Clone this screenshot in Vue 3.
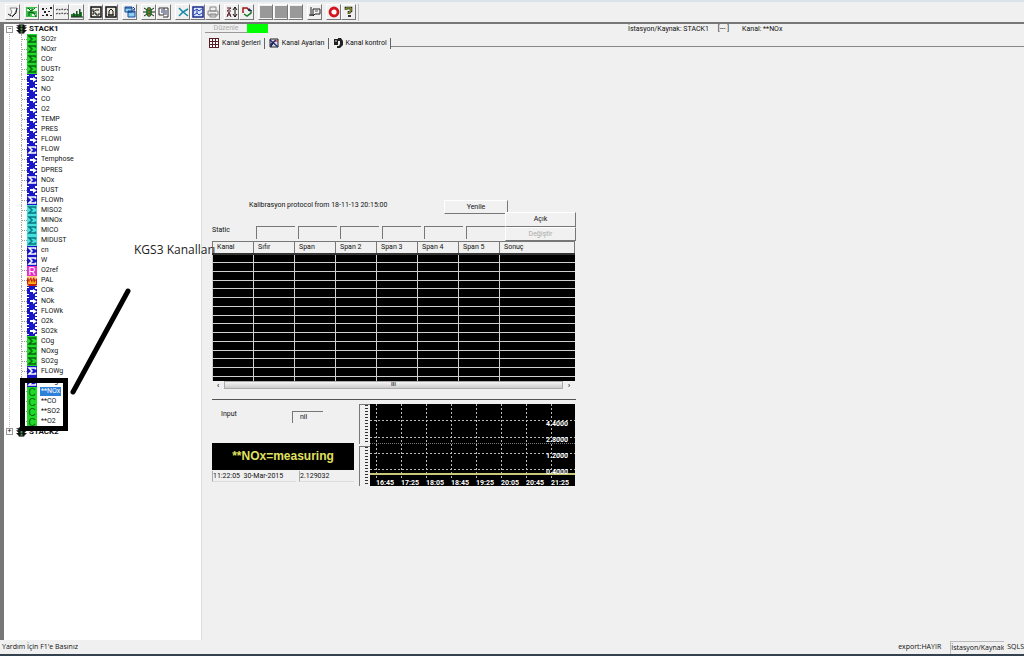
<script setup>
const toolGroups = [
  ['pen'],
  ['net', 'scatter', 'dots', 'bars'],
  ['save', 'picture'],
  ['cascade'],
  ['bug', 'copy'],
  ['cut', 'grid', 'print'],
  ['sort', 'swap'],
  ['block', 'block', 'block'],
  ['note'],
  ['stop', 'help']
]

const channels = [
  ['SO2r', 'green'], ['NOxr', 'green'], ['COr', 'green'], ['DUSTr', 'green'],
  ['SO2', 'link'], ['NO', 'link'], ['CO', 'link'], ['O2', 'link'], ['TEMP', 'link'],
  ['PRES', 'link'], ['FLOWi', 'link'], ['FLOW', 'blue'], ['Temphose', 'link'],
  ['DPRES', 'link'], ['NOx', 'blue'], ['DUST', 'link'], ['FLOWh', 'blue'],
  ['MISO2', 'cyan'], ['MINOx', 'cyan'], ['MICO', 'cyan'], ['MIDUST', 'cyan'],
  ['cn', 'blue'], ['W', 'blue'], ['O2ref', 'pink'], ['PAL', 'flame'],
  ['COk', 'link'], ['NOk', 'link'], ['FLOWk', 'link'], ['O2k', 'link'], ['SO2k', 'link'],
  ['COg', 'green'], ['NOxg', 'green'], ['SO2g', 'green'], ['FLOWg', 'blue'], ['CO2g', 'blue'],
  ['**NOx', 'calc'], ['**CO', 'calc'], ['**SO2', 'calc'], ['**O2', 'calc']
].map(([name, kind]) => ({ name, kind }))

const glyphs = { pink: 'R', calc: 'C' }
const columns = ['Kanal', 'Sıfır', 'Span', 'Span 2', 'Span 3', 'Span 4', 'Span 5', 'Sonuç']
const times = ['16:45', '17:25', '18:05', '18:45', '19:25', '20:05', '20:45', '21:25']
const levels = ['4.4000', '2.8000', '1.2000', '0.4000']
</script>

<template>
  <div class="app">
    <header class="toolbar">
      <div v-for="(group, g) in toolGroups" :key="g" class="group">
        <button v-for="(icon, i) in group" :key="i" type="button" :aria-label="icon">
          <svg viewBox="0 0 12 12">
            <template v-if="icon === 'pen'">
              <path d="M3 2h7l-2 5-3 3-2-1 2-3z" fill="#fff" stroke="#888" />
              <path d="M1 8l3 2M10 2l-1 5-4 4" stroke="#222" fill="none" />
            </template>
            <template v-else-if="icon === 'net'">
              <path d="M0 1h11v10H0z" fill="#3cc04a" />
              <path d="M1 3h4v2H1zM7 2h4v3H7zM6 8h4v2H6z" fill="#e8ffe8" />
              <path d="M2 2l3 3 4-3M3 10V6l5 1 2 4" stroke="#064c10" fill="none" />
            </template>
            <template v-else-if="icon === 'scatter'">
              <path d="M1 2h2v2H1zM3 5h2v2H3zM5 8h2v2H5zM9 1h2v2H9zM7 5h2v1H7zM9 9h2v1H9zM5 2h1v1H5zM1 9h2v1H1z" fill="#222" />
            </template>
            <template v-else-if="icon === 'dots'">
              <path d="M0 4l2-1 2 1 2-1 2 1 2-1 2 1M0 8l2-1 2 1 2-1 2 1 2-1 2 1" stroke="#222" stroke-dasharray="2 1" fill="none" />
            </template>
            <template v-else-if="icon === 'bars'">
              <path d="M0 11V8h2V7h1v1h2V5h1v3h2V3h1v3h2v5z" fill="#168a22" />
              <path d="M0 11h12M3 7v4M6 5v6M9 3v7" stroke="#222" />
            </template>
            <template v-else-if="icon === 'save'">
              <path d="M1 1h10v10H1z" fill="#e8e8dc" stroke="#111" stroke-width="1.5" />
              <path d="M3 3v3l3-2h3M3 9V7h3v2h3V7" stroke="#111" fill="none" />
            </template>
            <template v-else-if="icon === 'picture'">
              <path d="M1 1h10v10H1z" fill="#e8e8dc" stroke="#111" stroke-width="1.5" />
              <path d="M4 9V5l2-2 2 2v4H3h6" stroke="#111" fill="none" />
            </template>
            <template v-else-if="icon === 'cascade'">
              <path d="M1 1h7v5H1zM4 5h7v6H4z" fill="#8ccff0" stroke="#164a9c" />
              <path d="M1 2h7M4 6h7M9 1l2 2-2 1" stroke="#143a80" fill="none" />
            </template>
            <template v-else-if="icon === 'bug'">
              <path d="M1 2l3 2M11 2L8 4M0 6h12M1 10l3-2M11 10L8 8" stroke="#222" />
              <ellipse cx="6" cy="6" rx="3" ry="5" fill="#25722a" />
              <path d="M5 3h2M5 6h2M5 9h2" stroke="#e06030" />
            </template>
            <template v-else-if="icon === 'copy'">
              <path d="M1 2h5v7H1zM6 2h4v9H5" fill="#f8f8f8" stroke="#333" />
              <path d="M3 4h2M3 6h2M8 4v5" stroke="#2a3b88" />
            </template>
            <template v-else-if="icon === 'cut'">
              <path d="M2 2l4 4 5-3M2 10l4-4 5 4" stroke="#1687a8" stroke-width="1.5" fill="none" />
            </template>
            <template v-else-if="icon === 'grid'">
              <path d="M1 1h10v10H1z" fill="#dde6ff" stroke="#1b2a8c" stroke-width="1.5" />
              <path d="M2 5l3-2 2 2 3-2M2 9l3-2 2 2 3-2M5 3v5" stroke="#2946b8" fill="none" />
            </template>
            <template v-else-if="icon === 'print'">
              <path d="M3 1h6v4H3zM1 5h10v4H1zM3 8h6v3H3z" fill="#eee" stroke="#888" />
            </template>
            <template v-else-if="icon === 'sort'">
              <path d="M1 2h4L1 5h4M1 11l2-5 2 5M1 9h4" stroke="#5b1c2c" fill="none" />
              <path d="M9 1v10M7 4l2-3 2 3M7 8l2 3 2-3" stroke="#111" fill="none" />
            </template>
            <template v-else-if="icon === 'swap'">
              <path d="M2 7V2h4l3 3" stroke="#9b1818" stroke-width="1.5" fill="none" />
              <path d="M3 8l3 2 4-3V4" stroke="#167a2c" stroke-width="1.5" fill="none" />
              <path d="M8 2l3 3H7z" fill="#1c2c50" />
            </template>
            <path v-else-if="icon === 'block'" d="M0 0h12v12H0z" fill="#999" />
            <template v-else-if="icon === 'note'">
              <path d="M2 1v9M0 9h5M4 3h7v5H6l-2 2z" fill="none" stroke="#222" />
              <path d="M6 5h3" stroke="#555" />
            </template>
            <circle v-else-if="icon === 'stop'" cx="6" cy="6" r="4" fill="#fff" stroke="#d4141c" stroke-width="2.8" />
            <template v-else>
              <path d="M3 4V2h5v3L6 6v2" fill="none" stroke="#222" stroke-width="2.6" />
              <path d="M3 4V2h5v3L6 6v2" fill="none" stroke="#a8b820" />
              <path d="M5 9h3v2H5z" fill="#333" />
            </template>
          </svg>
        </button>
      </div>
    </header>

    <div class="body">
      <nav class="tree">
        <ul>
          <li class="station">
            <button type="button" class="toggle" aria-label="Daralt">−</button>
            <svg class="lamp" viewBox="0 0 12 10"><path d="M0 1h12L9 3h3L9 6h3l-3 3H3L0 6h3L0 3h3z" fill="#111" /><path d="M3 0h6v10H3z" fill="#111" /><path d="M5 1h2v2H5zM5 4h2v2H5zM5 7h2v2H5z" fill="#4c8a4c" /></svg>
            <span>STACK1</span>
          </li>
          <li v-for="c in channels" :key="c.name" class="channel">
            <svg class="mark" viewBox="0 0 10 10" preserveAspectRatio="none" :class="c.kind">
              <text v-if="glyphs[c.kind]" x="5" y="9" text-anchor="middle">{{ glyphs[c.kind] }}</text>
              <path v-else-if="c.kind === 'link'" d="M0 1h2v1H0zM8 1h2v2H8zM3 4h3V3l4 2.500L6 8V6H3zM0 8h2v1H0zM8 8h2v2H8z" fill="#fff" />
              <template v-else-if="c.kind === 'flame'">
                <path d="M0 3l1-2 1 3 2-3 1 3 2-3 1 3 2-2v7L8 10H2L0 8z" fill="#c61f10" />
                <path d="M1 8V4l1 3 1-4 2 4 1-4 1 4 2-3v4z" fill="#ffb21c" />
              </template>
              <path v-else d="M8.500 3.500V2H2l3 3-3 3h6.500V6.500" class="sum" />
            </svg>
            <span :class="{ selected: c.name === '**NOx' }">{{ c.name }}</span>
          </li>
          <li class="station">
            <button type="button" class="toggle" aria-label="Genişlet">+</button>
            <svg class="lamp" viewBox="0 0 12 10"><path d="M0 1h12L9 3h3L9 6h3l-3 3H3L0 6h3L0 3h3z" fill="#111" /><path d="M3 0h6v10H3z" fill="#111" /><path d="M5 1h2v2H5zM5 4h2v2H5zM5 7h2v2H5z" fill="#4c8a4c" /></svg>
            <span>STACK2</span>
          </li>
        </ul>
      </nav>

      <main class="main">
        <div class="info">
          <button type="button" class="edit" disabled>Düzenle</button>
          <span class="led"></span>
          <p><span>İstasyon/Kaynak: STACK1</span><span>[--- ]</span><span>Kanal: **NOx</span></p>
        </div>

        <div class="tabs">
          <button type="button" class="tab active">
            <svg viewBox="0 0 10 10"><path d="M0 0h10v10H0z" fill="#fff" /><path d="M0 .5h10M0 3.500h10M0 6.500h10M0 9.500h10M.5 0v10M3.500 0v10M6.500 0v10M9.500 0v10" stroke="#5a1c24" /></svg>Kanal ğerleri
          </button>
          <button type="button" class="tab">
            <svg viewBox="0 0 10 10"><path d="M1 1h8v8H1z" fill="#dde" stroke="#222" /><path d="M1 2l8 7M2 9V6l5-4" stroke="#222c70" stroke-width="1.5" /><path d="M6 3h3" stroke="#b02020" /></svg>Kanal Ayarları
          </button>
          <button type="button" class="tab">
            <svg viewBox="0 0 10 10"><path d="M1 1h4v6H1zM5 0h3l2 3v4L7 10H4V8h2l1-2V3H5z" fill="#222" /><path d="M2 3h2" stroke="#ddd" /></svg>Kanal kontrol
          </button>
          <span class="tab-line"></span>
        </div>

        <section class="panel">
          <div class="protocol">
            <p>Kalibrasyon protocol from 18-11-13 20:15:00</p>
            <button type="button" class="raised">Yenile</button>
          </div>
          <div class="static-row">
            <span class="label">Static</span>
            <div class="slots"><i v-for="n in 6" :key="n"></i></div>
            <div class="side-buttons">
              <button type="button" class="raised">Açık</button>
              <button type="button" class="raised" disabled>Değiştir</button>
            </div>
          </div>
          <table>
            <thead><tr><th v-for="c in columns" :key="c">{{ c }}</th></tr></thead>
            <tbody><tr v-for="r in 15" :key="r"><td v-for="c in columns" :key="c"></td></tr></tbody>
          </table>
          <div class="scroll">
            <button type="button" aria-label="Sola kaydır">‹</button>
            <span class="thumb">ııı</span>
            <button type="button" aria-label="Sağa kaydır">›</button>
          </div>

          <div class="lower">
            <div class="reading">
              <div class="input-row">
                <label for="input-value">Input</label>
                <input id="input-value" value="nil" readonly />
              </div>
              <strong class="banner">**NOx=measuring</strong>
              <div class="stamp"><span>11:22:05&nbsp; 30-Mar-2015</span><span>2.129032</span></div>
            </div>
            <div class="gauge"><div><i></i></div><div><i></i></div></div>
            <svg class="chart" viewBox="0 0 205 82">
              <path d="M0 0h205v82H0z" fill="#000" />
              <path v-for="(t, i) in times" :key="t" :d="`M${6.5 + i * 25} 0v74`" class="dash" />
              <path v-for="y in [16.5, 33.5, 49.5, 65.5]" :key="y" :d="`M0 ${y}h205`" class="dash" />
              <path d="M0 39.500h205" class="fine" />
              <path d="M0 70h205" stroke="#c8c878" stroke-width="2" />
              <text v-for="(t, i) in times" :key="t" :x="6 + i * 25" y="81">{{ t }}</text>
              <text v-for="(l, i) in levels" :key="l" x="198" :y="22 + i * 16" text-anchor="end">{{ l }}</text>
            </svg>
          </div>
        </section>
      </main>
    </div>

    <footer class="status">
      <span class="hint">Yardım İçin F1'e Basınız</span>
      <span>export:HAYIR</span>
      <span class="source">İstasyon/Kaynak</span>
      <span>SQLS</span>
    </footer>

    <div class="callout">KGS3 Kanalları</div>
    <div class="frame"></div>
    <svg class="pointer" viewBox="0 0 62 108"><path d="M3 104L58 3" stroke="#000" stroke-width="5" stroke-linecap="round" /></svg>
  </div>
</template>

<style>
body { margin: 0; background: #f0f0f0; }
</style>

<style scoped>
* { box-sizing: border-box; }
.app {
  position: relative;
  display: flex;
  flex-direction: column;
  min-height: 100vh;
  background: #f0f0f0;
  color: #111;
  font: 7px/10px Roboto, "Liberation Sans", sans-serif;
  white-space: nowrap;
  overflow: hidden;
}
button, input { font: inherit; color: inherit; padding: 0; margin: 0; border: 0; background: none; }
p, ul { margin: 0; padding: 0; list-style: none; }

.toolbar {
  display: flex;
  gap: 4px;
  height: 24px;
  padding: 2px 0 1px 5px;
  border-top: 2px solid #dbe3ea;
  border-bottom: 2px solid #777;
}
.group { display: flex; }
.group:last-child { padding-right: 2px; border-right: 1px solid #c4c4c4; }
.toolbar button {
  display: grid;
  place-items: center;
  width: 15px;
  height: 16px;
  border: 1px solid;
  border-color: #fff #777 #777 #fff;
}
.toolbar svg { width: 12px; height: 12px; }

.body { flex: 1; display: flex; }
.tree {
  width: 202px;
  background: #fff;
  border-left: 4px solid #777;
  border-right: 1px solid #ddd;
}
.tree ul {
  position: relative;
  display: grid;
  grid-auto-rows: 1fr;
  height: 413px;
  margin-left: 1px;
}
.tree ul::before {
  content: "";
  position: absolute;
  top: 8px;
  bottom: 8px;
  left: 4px;
  border-left: 1px dotted #bbb;
}
.tree li { position: relative; display: flex; align-items: center; }
.toggle {
  width: 7px;
  height: 7px;
  margin: 0 3px 0 1px;
  border: 1px solid #999;
  background: #fff;
  line-height: 5px;
}
.lamp { width: 11px; height: 10px; margin-right: 2px; }
.station span { font: bold 8px/10px Roboto, sans-serif; }
.channel { margin-left: 16px; border-left: 1px dotted #aaa; }
.channel::before { content: ""; width: 5px; border-top: 1px dotted #999; }
.channel span { margin-left: 3px; padding: 0 1px; line-height: 9px; }
.channel .selected { background: #2f80d8; color: #fff; }
.mark { width: 10px; height: 100%; background: #1717c8; fill: #fff; stroke: none; }
.mark text { font: 10px "Liberation Sans", sans-serif; }
.sum { fill: none; stroke: #fff; stroke-width: 1.5; }
.mark.green, .mark.calc { background: #20da28; fill: #07640f; }
.green .sum { stroke: #07640f; }
.mark.cyan { background: #45e0dc; }
.cyan .sum { stroke: #0a7480; }
.mark.pink { background: #e830c8; }
.mark.flame { background: #ffd080; }

.main { flex: 1; min-width: 0; padding-left: 3px; }
.info { display: flex; align-items: center; height: 9px; }
.edit { width: 42px; height: 9px; color: #aaa; border-bottom: 1px solid #999; line-height: 8px; }
.led { width: 21px; height: 9px; background: #0f0; }
.info p { display: flex; gap: 9px; margin-left: 360px; }
.info p span:last-child { margin-left: 4px; }
.tabs { display: flex; align-items: center; height: 14px; margin-top: 3px; }
.tab { display: flex; align-items: center; gap: 3px; height: 11px; padding: 0 3px 0 4px; border-right: 1px solid #666; }
.tab svg { width: 10px; height: 10px; }
.tab-line { flex: 1; align-self: flex-end; border-top: 1px solid #888; margin-bottom: 3px; }

.panel { width: 364px; margin: 150px 0 0 7px; }
.protocol { display: flex; justify-content: space-between; height: 14px; padding: 0 68px 0 37px; }
.raised { border: 1px solid; border-color: #fff #777 #777 #fff; background: #f1f1f1; }
.protocol .raised { width: 64px; }
.raised:disabled { color: #aaa; }
.static-row { display: flex; height: 29px; margin-top: -2px; }
.label { width: 44px; padding-top: 13px; }
.slots { flex: 1; display: flex; gap: 3px; padding: 14px 0 2px; }
.slots i { flex: 1; border-top: 1px solid #777; border-left: 1px solid #777; }
.side-buttons { display: flex; flex-direction: column; width: 71px; }
.side-buttons button { flex: 1; }
table { width: 363px; table-layout: fixed; border-collapse: collapse; background: #000; }
th { width: 41px; height: 12px; padding: 0 0 0 4px; text-align: left; font-weight: normal; line-height: 10px; background: #f0f0f0; border: 1px solid #777; border-bottom: 2px solid #333; }
th:last-child { width: auto; }
td { height: 9px; padding: 0; border: 1px solid #d0d0d0; border-width: 0 0 1px 1px; }
tr:nth-child(4n) td { height: 8px; }
tbody tr:last-child td { height: 4px; border-bottom: 0; }
.scroll { display: flex; align-items: center; height: 9px; width: 363px; }
.scroll button { width: 12px; line-height: 8px; font-weight: bold; }
.thumb { flex: 1; height: 8px; border: 1px solid #aaa; background: linear-gradient(#f4f4f4, #ccc); text-align: center; line-height: 5px; }

.lower { display: flex; margin-top: 9px; padding-top: 4px; border-top: 1px solid #555; }
.reading { width: 142px; }
.input-row { display: flex; height: 39px; padding-left: 9px; }
.input-row label { width: 71px; padding-top: 5px; }
.input-row input { width: 31px; height: 12px; margin-top: 7px; padding-left: 7px; border-top: 1px solid #777; border-left: 1px solid #777; }
.banner { display: block; height: 27px; background: #000; color: #e0e060; text-align: center; font: bold 12px/27px "Liberation Sans", sans-serif; }
.stamp { display: flex; gap: 3px; margin-top: 1px; }
.stamp span { height: 11px; border-left: 1px solid #aaa; border-bottom: 1px solid #ddd; }
.stamp span:first-child { width: 84px; }
.stamp span:last-child { flex: 1; }
.gauge { display: flex; flex-direction: column; gap: 2px; width: 11px; margin-left: 5px; }
.gauge div { flex: 1; padding-left: 5px; border-left: 1px solid #777; border-top: 1px solid #777; }
.gauge i { display: block; width: 3px; height: 100%; background: repeating-linear-gradient(#333 0 1px, transparent 1px 3px); }
.chart { width: 205px; height: 82px; }
.dash { stroke: #bbb; stroke-dasharray: 2 2; }
.fine { stroke: #777; stroke-dasharray: 1 1; }
.chart text { fill: #fff; font: bold 7px Roboto, sans-serif; }

.status { display: flex; align-items: center; height: 16px; padding-left: 2px; border-bottom: 2px solid #344250; line-height: 12px; font-family: "Open Sans", sans-serif; }
.hint { flex: 1; }
.source { width: 54px; margin: 0 3px 0 9px; overflow: hidden; border: 1px solid #bbb; border-width: 1px 0 0 1px; }

.callout { position: absolute; left: 134px; top: 242px; font: 12px/16px "Open Sans", sans-serif; color: #222; }
.frame { position: absolute; left: 20px; top: 378px; width: 48px; height: 53px; border: 5px solid #000; }
.pointer { position: absolute; left: 70px; top: 288px; width: 62px; height: 108px; }
</style>
